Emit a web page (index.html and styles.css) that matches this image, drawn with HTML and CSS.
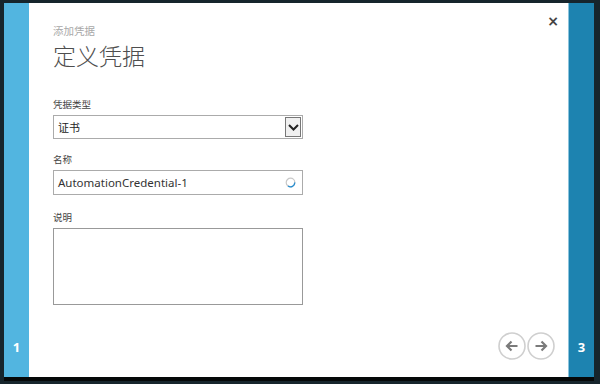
FILE: index.html
```html
<!DOCTYPE html>
<html>
<head>
<meta charset="utf-8">
<title>添加凭据</title>
<link rel="stylesheet" href="styles.css">
</head>
<body>
<div class="dialog">
    <div class="strip strip-left"><span class="step">1</span></div>

    <div class="main">
        <a class="closebtn" href="#">&times;</a>

        <div class="subtitle">添加凭据</div>
        <h1 class="title">定义凭据</h1>

        <div class="field first">
            <label class="lbl">凭据类型</label>
            <div class="selectbox">
                <span class="selval">证书</span>
                <span class="dropbtn">
                    <svg width="11" height="7" viewBox="0 0 11 7"><path d="M1 1 L5.5 5.5 L10 1" fill="none" stroke="#222" stroke-width="2"/></svg>
                </span>
            </div>
        </div>

        <div class="field">
            <label class="lbl">名称</label>
            <div class="textbox">
                <span class="txtval">AutomationCredential-1</span>
                <svg class="spinner" width="11" height="11" viewBox="0 0 11 11">
                    <circle cx="5.5" cy="5.5" r="4.3" fill="none" stroke="#c8c8c8" stroke-width="1.2"/>
                    <path d="M9.8 5.5 A4.3 4.3 0 0 1 3 9" fill="none" stroke="#2a8fd0" stroke-width="1.4"/>
                </svg>
            </div>
        </div>

        <div class="field desc">
            <label class="lbl">说明</label>
            <div class="areabox"></div>
        </div>

        <div class="navrow">
            <span class="navbtn">
                <svg width="28" height="28" viewBox="0 0 28 28"><circle cx="14" cy="14" r="13" fill="none" stroke="#cfcfcf" stroke-width="1.6"/><path d="M19.5 14 H9 M13.5 9.5 L9 14 L13.5 18.5" fill="none" stroke="#7a7a7a" stroke-width="2.2"/></svg>
            </span>
            <span class="navbtn">
                <svg width="28" height="28" viewBox="0 0 28 28"><circle cx="14" cy="14" r="13" fill="none" stroke="#cfcfcf" stroke-width="1.6"/><path d="M8.5 14 H19 M14.5 9.5 L19 14 L14.5 18.5" fill="none" stroke="#7a7a7a" stroke-width="2.2"/></svg>
            </span>
        </div>
    </div>

    <div class="strip strip-right"><span class="step">3</span></div>
</div>
</body>
</html>
```

FILE: styles.css
```css
html, body {
    margin: 0;
    height: 100%;
}

body {
    background-color: #16252c;
    padding: 3px 6px 0 4px;
    box-sizing: border-box;
    font-family: "Noto Sans", "Noto Sans CJK SC", sans-serif;
}

.dialog {
    display: flex;
    height: 374px;
    background-color: #fff;
    box-shadow: 0 4px 0 #050808;
}

.strip {
    display: flex;
    flex-direction: column;
    justify-content: flex-end;
    align-items: center;
    padding-bottom: 23px;
    box-sizing: border-box;
}

.strip-left {
    width: 25px;
    background-color: #52b5e0;
}

.strip-right {
    width: 26px;
    background-color: #1d83b0;
    border-left: 1px solid #8cc4dd;
}

.step {
    color: #fff;
    font-family: "Open Sans", sans-serif;
    font-weight: 700;
    font-size: 13px;
    line-height: 14px;
}

.main {
    flex: 1;
    position: relative;
    display: flex;
    flex-direction: column;
    padding: 21px 13px 17px 24px;
}

.closebtn {
    position: absolute;
    top: 10px;
    right: 9px;
    color: #444;
    font-family: "DejaVu Sans", sans-serif;
    font-weight: 700;
    font-size: 14px;
    text-decoration: none;
}

.subtitle {
    color: #a8a8a8;
    font-size: 10.5px;
    line-height: 14px;
}

.title {
    margin: 2px 0 0 0;
    color: #4e4e4e;
    font-family: "Noto Sans CJK SC", sans-serif;
    font-weight: 300;
    font-size: 23px;
    line-height: 30px;
}

.field {
    width: 250px;
}

.lbl {
    display: block;
    color: #444;
    font-size: 9.5px;
    line-height: 12px;
    margin-top: 15px;
    margin-bottom: 4px;
}

.first .lbl {
    margin-top: 29px;
}

.desc .lbl {
    margin-top: 17px;
}

.selectbox, .textbox {
    display: flex;
    align-items: center;
    box-sizing: border-box;
    border: 1px solid #ababab;
    padding-left: 4px;
    padding-right: 1px;
}

.selectbox {
    height: 24px;
}

.textbox {
    height: 25px;
    padding-right: 6px;
}

.selval {
    flex: 1;
    color: #222;
    font-size: 11px;
}

.dropbtn {
    display: flex;
    align-items: center;
    justify-content: center;
    width: 14px;
    height: 18px;
    border: 1px solid #777;
    background-color: #f0f0f0;
}

.txtval {
    flex: 1;
    color: #333;
    font-size: 11.5px;
}

.areabox {
    height: 75px;
    border: 1px solid #999;
}

.navrow {
    margin-top: auto;
    display: flex;
    justify-content: flex-end;
    gap: 1px;
}

.navbtn {
    display: block;
    width: 28px;
    height: 28px;
}
```
